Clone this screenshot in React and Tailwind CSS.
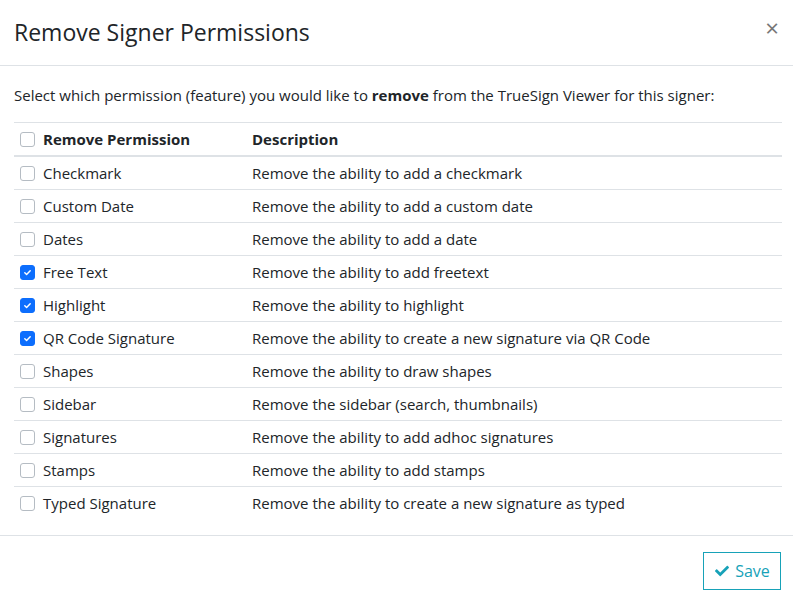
import React, { useState } from 'react';

const PERMISSIONS = [
  { name: 'Checkmark', desc: 'Remove the ability to add a checkmark', checked: false },
  { name: 'Custom Date', desc: 'Remove the ability to add a custom date', checked: false },
  { name: 'Dates', desc: 'Remove the ability to add a date', checked: false },
  { name: 'Free Text', desc: 'Remove the ability to add freetext', checked: true },
  { name: 'Highlight', desc: 'Remove the ability to highlight', checked: true },
  { name: 'QR Code Signature', desc: 'Remove the ability to create a new signature via QR Code', checked: true },
  { name: 'Shapes', desc: 'Remove the ability to draw shapes', checked: false },
  { name: 'Sidebar', desc: 'Remove the sidebar (search, thumbnails)', checked: false },
  { name: 'Signatures', desc: 'Remove the ability to add adhoc signatures', checked: false },
  { name: 'Stamps', desc: 'Remove the ability to add stamps', checked: false },
  { name: 'Typed Signature', desc: 'Remove the ability to create a new signature as typed', checked: false },
];

const Checkbox = ({ checked, onChange }) => (
  <button
    type="button"
    onClick={onChange}
    className={
      checked
        ? 'w-[15px] h-[15px] rounded-[3px] bg-[#0d6efd] border border-[#0d6efd] flex items-center justify-center shrink-0'
        : 'w-[15px] h-[15px] rounded-[3px] bg-white border border-[#b5bcc3] flex items-center justify-center shrink-0'
    }
  >
    {checked && (
      <svg width="9" height="9" viewBox="0 0 20 20">
        <path d="M4 10.5l4 4 8-8.5" fill="none" stroke="#fff" strokeWidth="3.2" strokeLinecap="round" strokeLinejoin="round" />
      </svg>
    )}
  </button>
);

const App = () => {
  const [rows, setRows] = useState(PERMISSIONS);
  const allChecked = rows.every((r) => r.checked);

  const toggle = (i) => {
    setRows(rows.map((r, idx) => (idx === i ? { ...r, checked: !r.checked } : r)));
  };

  const toggleAll = () => {
    setRows(rows.map((r) => ({ ...r, checked: !allChecked })));
  };

  return (
    <div className="w-[793px] h-[597px] bg-white text-[#212529] overflow-hidden" style={{ fontFamily: '"Open Sans", sans-serif' }}>
      <div className="h-[66px] flex items-center justify-between pl-[14px] pr-[14px] border-b border-[#dee2e6]">
        <h5 className="text-[23px] leading-none font-normal -mt-[1px]">Remove Signer Permissions</h5>
        <button type="button" className="text-[24px] leading-none text-[#777] -mt-[10px]">×</button>
      </div>

      <div className="pl-[14px] pr-[11px] pt-[19px] pb-[16px]">
        <p className="text-[15px] leading-[21px] mb-[16px]">
          Select which permission (feature) you would like to <b>remove</b> from the TrueSign Viewer for this signer:
        </p>

        <table className="w-full text-[15px] leading-[20px] border-t border-[#dee2e6]">
          <thead>
            <tr className="border-b-2 border-[#dee2e6]">
              <th className="text-left font-bold pl-[6px] py-[6px] w-[232px]">
                <div className="flex items-center gap-[8px]">
                  <Checkbox checked={allChecked} onChange={toggleAll} />
                  <span>Remove Permission</span>
                </div>
              </th>
              <th className="text-left font-bold pl-[6px] py-[6px]">Description</th>
            </tr>
          </thead>
          <tbody>
            {rows.map((row, i) => (
              <tr key={row.name} className={i < rows.length - 1 ? 'border-b border-[#dee2e6]' : ''}>
                <td className="pl-[6px] py-[6px]">
                  <div className="flex items-center gap-[8px]">
                    <Checkbox checked={row.checked} onChange={() => toggle(i)} />
                    <span>{row.name}</span>
                  </div>
                </td>
                <td className="pl-[6px] py-[6px]">{row.desc}</td>
              </tr>
            ))}
          </tbody>
        </table>
      </div>

      <div className="border-t border-[#dee2e6] flex justify-end pt-[16px] pr-[12px]">
        <button
          type="button"
          className="w-[78px] h-[38px] border border-[#17a2b8] text-[#17a2b8] text-[16px] flex items-center justify-center gap-[5px]"
        >
          <svg width="16" height="14" viewBox="0 0 512 512">
            <path fill="#17a2b8" d="M173.9 439.4l-166.4-166.4c-10-10-10-26.2 0-36.2l36.2-36.2c10-10 26.2-10 36.2 0L192 312.7 432.1 72.6c10-10 26.2-10 36.2 0l36.2 36.2c10 10 10 26.2 0 36.2L210.1 439.4c-10 10-26.2 10-36.2 0z" />
          </svg>
          Save
        </button>
      </div>
    </div>
  );
};

export default App;
